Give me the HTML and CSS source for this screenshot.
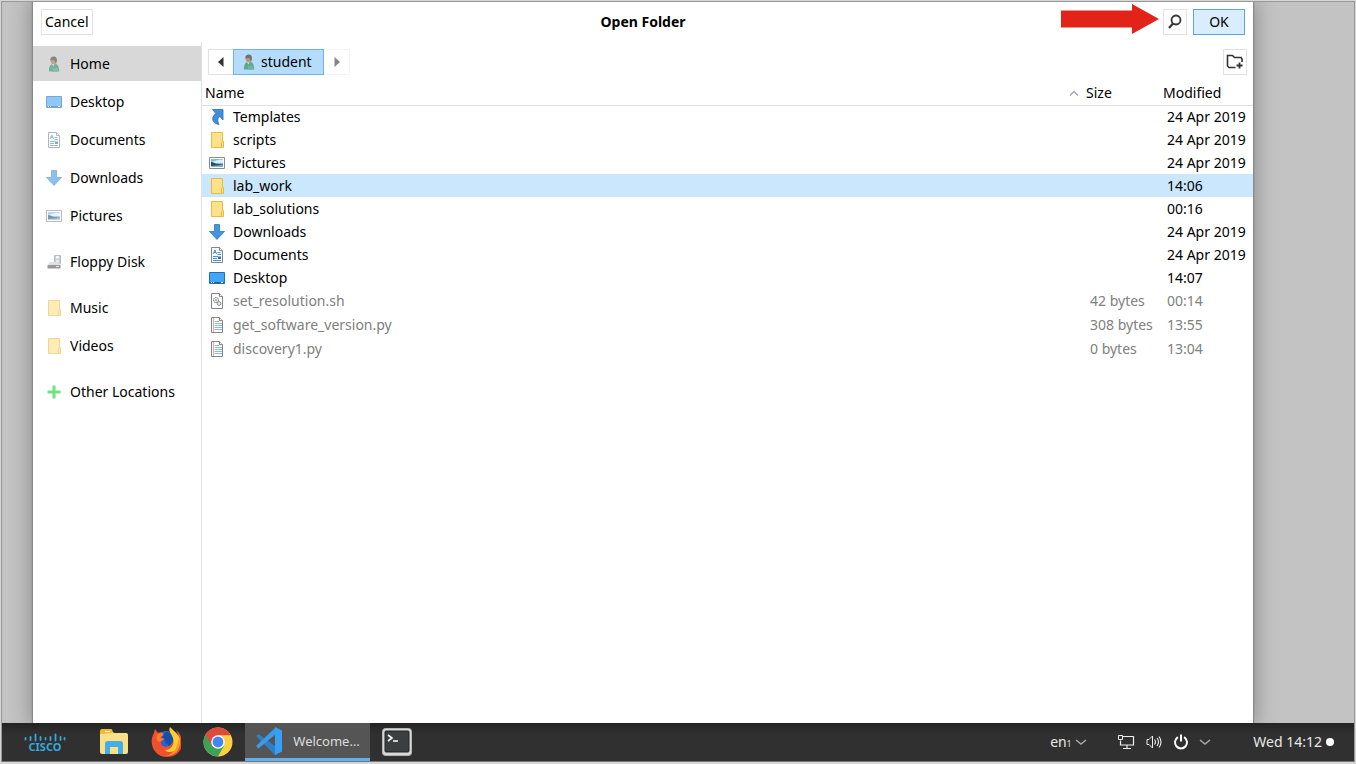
FILE: index.html
```html
<!DOCTYPE html>
<html lang="en">
<head>
<meta charset="utf-8">
<title>Open Folder</title>
<link rel="stylesheet" href="styles.css">
</head>
<body>
<svg class="defs" aria-hidden="true">
  <defs>
    <symbol id="i-user" viewBox="0 0 16 16">
      <path d="M3 15.500c-.3-3 .5-6.300 3-7.500l3-.4c2.500.5 4.200 3.500 4.200 7.900z" fill="#5fa88d"/>
      <path d="M6 8l1.500 2.500 1.300-3z" fill="#d7ebe2"/>
      <ellipse cx="7.500" cy="4.600" rx="2.900" ry="3.800" fill="#b99a7c"/>
      <path d="M4.500 4.500C3.500.5 8-.5 10 1.200c1.500 1.500 1 5-.2 6.500L8.300 4z" fill="#75706c"/>
      <path d="M7 12h5v3.500H7z" fill="#71b79b"/>
    </symbol>
    <symbol id="i-desktop" viewBox="0 0 16 16">
      <path d="M.5 2.500h15v11H.5z" fill="#42a5f5" stroke="#1d6fb8"/>
      <path d="M1 12h14v1H1z" fill="#1c5f9e"/>
      <path d="M2 12.500h1m1 0h1m7 0h2" stroke="#fff"/>
    </symbol>
    <symbol id="i-doc" viewBox="0 0 16 16">
      <path d="M2.500.5h8l3 3v12h-11z" fill="#fff" stroke="#858585"/>
      <path d="M10.500.5v3h3" fill="#eee" stroke="#858585"/>
      <path d="M4 7l2-4 1.500 4M5 5.500h2M8.500 5.500h3M8.500 7.500H12M4 9.500h5M4 11.500h4M4 13.500h8" fill="none" stroke="#3c94dc"/>
      <path d="M9 9.500h3v2.500H9z" fill="#3c6c94"/>
    </symbol>
    <symbol id="i-down" viewBox="0 0 16 16">
      <path d="M5.500.5h5v7h5L8 15.500.5 7.500h5z" fill="#3f96e4" stroke="#2f78bf" stroke-width=".8"/>
    </symbol>
    <symbol id="i-pic" viewBox="0 0 16 16">
      <path d="M.5 2.500h15v11H.5z" fill="#fff" stroke="#8c8c8c"/>
      <path d="M2 4h12v8H2z" fill="#7db8ea"/>
      <path d="M6 6c3-2 5-1 8-1.500V8H2V7z" fill="#dceefa"/>
      <path d="M2 7c3 0 4 2 7 2l5 .5V11H2z" fill="#23506b"/>
      <path d="M2 11l12-1v2H2z" fill="#88b4c9"/>
    </symbol>
    <symbol id="i-floppy" viewBox="0 0 16 16">
      <path d="M8.500 1.500h6v8h-6z" fill="#a8adb3" stroke="#8b8f94"/>
      <path d="M10 2h3v2.500h-3z" fill="#f1f1f1"/><path d="M10 6h3v3h-3z" fill="#d6dbe2"/>
      <path d="M4 8h8l3 3H2z" fill="#ccc"/><path d="M1.500 11h13v3.500h-13z" fill="#555"/>
      <path d="M10 12.500h3" stroke="#ddd"/>
    </symbol>
    <symbol id="i-folder" viewBox="0 0 16 16">
      <path d="M2.500.5h11v9h1v6h-12z" fill="#fde189" stroke="#e3bd48"/>
      <path d="M12.500 15V10.500l1-1" fill="none" stroke="#e3bd48"/>
    </symbol>
    <symbol id="i-plus" viewBox="0 0 16 16">
      <path d="M8 1.500v13M1.500 8h13" stroke="#12cf30" stroke-width="3"/>
    </symbol>
    <symbol id="i-link" viewBox="0 0 16 16">
      <path d="M3.500.5h10.500v10.500l-3.200-3.500c-2.500 1.500-2.500 4.500-.8 8C5 15 .5 9.500 6.800 4.500z" fill="#3f8fdc" stroke="#2b70b3" stroke-width=".8"/>
    </symbol>
    <symbol id="i-script" viewBox="0 0 16 16">
      <path d="M2.500.5h8l3 3v12h-11z" fill="#fff" stroke="#858585"/>
      <path d="M10.500.5v3h3" fill="#eee" stroke="#858585"/>
      <circle cx="7" cy="7" r="2.500" fill="#eee" stroke="#777" stroke-dasharray="1.500 .6"/><circle cx="7" cy="7" r=".8" fill="#777"/>
      <circle cx="10" cy="10.500" r="1.900" fill="#dfe9f2" stroke="#85929e"/>
    </symbol>
    <symbol id="i-text" viewBox="0 0 16 16">
      <path d="M2.500.5h8l3 3v12h-11z" fill="#fff" stroke="#858585"/>
      <path d="M10.500.5v3h3" fill="#eee" stroke="#858585"/>
      <path d="M5.500 4.500H10M5.500 6.500H13M5.500 8.500H13M5.500 10.500H13M5.500 12.500H13" stroke="#8dbbe8"/>
      <path d="M4.500 1v14" stroke="#efa79b"/>
    </symbol>
  </defs>
</svg>
<div class="frame">
  <div class="desktop">
    <main class="dialog">
      <header class="titlebar">
        <button class="btn">Cancel</button>
        <h1 class="title">Open Folder</h1>
        <div class="title-actions">
          <svg class="arrow" viewBox="0 0 98 30" aria-hidden="true"><path d="M0 6.500h71V0l27 15-27 15v-6.500H0z" fill="#e2231a"/></svg>
          <button class="btn icon-btn" aria-label="Search"><svg width="16" height="16" viewBox="0 0 16 16"><circle cx="9" cy="6" r="4.500" fill="none" stroke="#333" stroke-width="1.800"/><path d="M6 9.500L2 14" stroke="#333" stroke-width="2.200"/></svg></button>
          <button class="btn ok">OK</button>
        </div>
      </header>
      <div class="body">
        <nav class="sidebar">
          <ul class="group">
            <li><a class="place current" href="#"><svg class="ico"><use href="#i-user"/></svg>Home</a></li>
            <li><a class="place" href="#"><svg class="ico"><use href="#i-desktop"/></svg>Desktop</a></li>
            <li><a class="place" href="#"><svg class="ico"><use href="#i-doc"/></svg>Documents</a></li>
            <li><a class="place" href="#"><svg class="ico"><use href="#i-down"/></svg>Downloads</a></li>
            <li><a class="place" href="#"><svg class="ico"><use href="#i-pic"/></svg>Pictures</a></li>
          </ul>
          <ul class="group">
            <li><a class="place" href="#"><svg class="ico"><use href="#i-floppy"/></svg>Floppy Disk</a></li>
          </ul>
          <ul class="group">
            <li><a class="place" href="#"><svg class="ico"><use href="#i-folder"/></svg>Music</a></li>
            <li><a class="place" href="#"><svg class="ico"><use href="#i-folder"/></svg>Videos</a></li>
          </ul>
          <ul class="group">
            <li><a class="place" href="#"><svg class="ico"><use href="#i-plus"/></svg>Other Locations</a></li>
          </ul>
        </nav>
        <section class="content">
          <div class="pathbar">
            <div class="crumbs">
              <button class="crumb step" aria-label="Back"><svg width="6" height="10" viewBox="0 0 6 10"><path d="M5.500 0v10L0 5z" fill="#333"/></svg></button>
              <button class="crumb active"><svg class="ico"><use href="#i-user"/></svg>student</button>
              <button class="crumb step next" aria-label="Forward"><svg width="6" height="10" viewBox="0 0 6 10"><path d="M.5 0v10L6 5z" fill="#858585"/></svg></button>
            </div>
            <button class="btn icon-btn" aria-label="New folder"><svg width="18" height="16" viewBox="0 0 18 16"><path d="M9.500 13.500H3L1.500 12V1.500h5l2 2H15l1 1.500v3" fill="none" stroke="#333" stroke-width="1.600"/><path d="M13.500 8.500v6M10.500 11.500h6" stroke="#333" stroke-width="1.800"/></svg></button>
          </div>
          <table class="files">
            <thead>
              <tr><th class="c-name"><span class="head">Name<svg width="10" height="6" viewBox="0 0 10 6"><path d="M1 5.500L5 1.500l4 4" fill="none" stroke="#a0a0a0" stroke-width="1.200"/></svg></span></th><th class="c-size">Size</th><th class="c-mod">Modified</th></tr>
            </thead>
            <tbody>
              <tr><td><span class="file"><svg class="ico"><use href="#i-link"/></svg>Templates</span></td><td></td><td>24 Apr 2019</td></tr>
              <tr><td><span class="file"><svg class="ico"><use href="#i-folder"/></svg>scripts</span></td><td></td><td>24 Apr 2019</td></tr>
              <tr><td><span class="file"><svg class="ico"><use href="#i-pic"/></svg>Pictures</span></td><td></td><td>24 Apr 2019</td></tr>
              <tr class="selected"><td><span class="file"><svg class="ico"><use href="#i-folder"/></svg>lab_work</span></td><td></td><td>14:06</td></tr>
              <tr><td><span class="file"><svg class="ico"><use href="#i-folder"/></svg>lab_solutions</span></td><td></td><td>00:16</td></tr>
              <tr><td><span class="file"><svg class="ico"><use href="#i-down"/></svg>Downloads</span></td><td></td><td>24 Apr 2019</td></tr>
              <tr><td><span class="file"><svg class="ico"><use href="#i-doc"/></svg>Documents</span></td><td></td><td>24 Apr 2019</td></tr>
              <tr><td><span class="file"><svg class="ico"><use href="#i-desktop"/></svg>Desktop</span></td><td></td><td>14:07</td></tr>
            </tbody>
            <tbody class="disabled">
              <tr><td><span class="file"><svg class="ico"><use href="#i-script"/></svg>set_resolution.sh</span></td><td>42 bytes</td><td>00:14</td></tr>
              <tr><td><span class="file"><svg class="ico"><use href="#i-text"/></svg>get_software_version.py</span></td><td>308 bytes</td><td>13:55</td></tr>
              <tr><td><span class="file"><svg class="ico"><use href="#i-text"/></svg>discovery1.py</span></td><td>0 bytes</td><td>13:04</td></tr>
            </tbody>
          </table>
        </section>
      </div>
    </main>
  </div>
  <footer class="taskbar">
    <button class="task cisco" aria-label="Menu">
      <svg width="42" height="9" viewBox="0 0 42 9"><path d="M1.500 5v1.500M6.500 4v3M11.500 1.500v6M16.500 4v3M21.500 5v1.500M26.500 4v3M31.500 1.500v6M36.500 4v3M40.500 5v1.500" stroke="#35a8dc" stroke-width="1.800" stroke-linecap="round"/></svg>
      <span>CISCO</span>
    </button>
    <button class="task" aria-label="Files"><svg width="30" height="28" viewBox="0 0 30 28"><path d="M1 4q0-2 2-2h9l3 3h12q2 0 2 2v17q0 2-2 2H3q-2 0-2-2z" fill="#fbe08a"/><path d="M1 6V3q0-2 2-2h9q1.500 0 1.500 2v2z" fill="#f4b92e"/><path d="M6 3.500h5" stroke="#fff"/><path d="M6 26V15.500q0-2.500 2.500-2.500h13q2.500 0 2.500 2.500V26h-5v-7h-8v7z" fill="#42b0e6"/></svg></button>
    <button class="task" aria-label="Firefox"><svg width="30" height="32" viewBox="0 0 30 32"><circle cx="15" cy="17" r="12" fill="#2066d0"/><path d="M15 6c6 0 9 5 8 11l-5 3-7-8z" fill="#164da8"/><path d="M3 7l1-4 3 4c2-1 4-1 5 0l-3 4 5 2-4 3c-1 4 4 6 8 4 3-1 5-5 4-9l3 2c4-2 2-5 0-9l3 3c8 12 0 24-12 24C3 31-3 17 3 7z" fill="#f1502c"/><path d="M19 1c-2 4 1 6 2 9 4 6 0 14-7 14 2 3 9 3 13-2 4-6 2-13-4-17z" fill="#ffcf32"/><path d="M28 12c3 10-3 18-13 18 6-2 10-6 11-11z" fill="#ff9a27"/><path d="M7 8c3-2 6-1 5 1l-3 3 4 1-5 3c-3-2-3-5-1-8z" fill="#fb7b35"/></svg></button>
    <button class="task" aria-label="Chrome"><svg width="30" height="30" viewBox="0 0 30 30"><circle cx="15" cy="15" r="14.500" fill="#fbd043"/><path d="M15 15L2.400 7.800A14.500 14.500 0 0 0 15 29.500l6.200-11z" fill="#3da157"/><path d="M2.400 7.800A14.500 14.500 0 0 1 27.700 8.200H15L9 18.500z" fill="#dd4b3e"/><circle cx="15" cy="15" r="6.800" fill="#fff"/><circle cx="15" cy="15" r="5.400" fill="#4285f4"/></svg></button>
    <button class="task running"><svg width="28" height="28" viewBox="0 0 28 28"><path d="M1 9l2.500-2L27 24l-7 4z" fill="#2d7fc7"/><path d="M1 19l2.500 2.500L21 7V0z" fill="#3b9be8"/><path d="M20 0l7 3.500v21L20 28z" fill="#37a0f4"/></svg>Welcome…</button>
    <button class="task" aria-label="Terminal"><svg width="30" height="28" viewBox="0 0 30 28"><rect x=".5" y=".5" width="29" height="27" rx="3" fill="#d8d8d8" stroke="#b5b5b5"/><rect x="3" y="3" width="24" height="21" rx="1" fill="#3b3f3f" stroke="#222"/><path d="M6 7l4 3-4 3M11 13h5" fill="none" stroke="#fff" stroke-width="1.600"/></svg></button>
    <div class="tray">
      <button class="tray-item lang">en<small>1</small><svg width="12" height="7" viewBox="0 0 12 7"><path d="M1 1l5 4 5-4" fill="none" stroke="#aaa" stroke-width="1.500"/></svg></button>
      <button class="tray-item status" aria-label="System">
        <svg width="18" height="16" viewBox="0 0 18 16"><path d="M5 2.500h11.500v8.500h-13V6.500M10 11v3.500M6 14.500h8" fill="none" stroke="#eee" stroke-width="1.200"/><path d="M1.500 1.500h4v4h-4z" fill="#333" stroke="#eee"/></svg>
        <svg width="18" height="16" viewBox="0 0 18 16"><path d="M2 5.500h2l3.500-3.500v12L4 10.500H2z" fill="none" stroke="#eee"/><path d="M9.500 5.500q2 2.500 0 5M12 4q3 4 0 8M14 2.500q4 5.500 0 11" fill="none" stroke="#eee" stroke-width="1.100"/></svg>
        <svg width="16" height="16" viewBox="0 0 16 16"><path d="M5 3.200a6 6 0 1 0 6 0M8 .5v7" fill="none" stroke="#fff" stroke-width="2"/></svg>
        <svg width="12" height="7" viewBox="0 0 12 7"><path d="M1 1l5 4 5-4" fill="none" stroke="#aaa" stroke-width="1.500"/></svg>
      </button>
      <button class="tray-item clock">Wed 14:12<i class="dot"></i></button>
    </div>
  </footer>
</div>
</body>
</html>
```
FILE: styles.css
```css
* { box-sizing: border-box; }
body {
  margin: 0;
  padding: 1px 1px 2px;
  height: 100vh;
  background: #d6d6d6;
  color: #000;
  font: 14px/20px "Noto Sans", sans-serif;
}
button { font: inherit; color: inherit; cursor: pointer; }
.defs { position: absolute; width: 0; height: 0; }
.ico { width: 16px; height: 16px; flex: none; }
.frame {
  display: flex;
  flex-direction: column;
  height: 100%;
  border: 1px solid #999;
  border-bottom: 0;
  background: #c3c3c3;
}
.desktop {
  flex: 1;
  display: flex;
  padding: 0 101px 0 31px;
  overflow: hidden;
}
.dialog {
  flex: 1;
  display: flex;
  flex-direction: column;
  background: #fff;
  box-shadow: 0 0 1px 1px #888, 0 0 20px 2px rgba(0, 0, 0, .3);
}
.titlebar {
  display: grid;
  grid-template-columns: 1fr auto 1fr;
  align-items: center;
  height: 40px;
  padding: 0 8px;
}
.title { margin: 0; font-size: 14px; font-weight: 700; }
.btn {
  height: 26px;
  padding: 0 3px;
  border: 1px solid #e2e2e2;
  background: #fff;
  justify-self: start;
  line-height: 20px;
}
.title-actions { display: flex; justify-content: flex-end; align-items: center; gap: 6px; }
.arrow { width: 98px; height: 30px; margin: 0 -2px 6px 0; }
.icon-btn { display: flex; align-items: center; justify-content: center; width: 24px; padding: 0; }
.ok { width: 52px; background: #d9edfd; border-color: #5ca3e3; }
.body { flex: 1; display: flex; }
.sidebar { width: 169px; padding-top: 4px; border-right: 1px solid #e0e0e0; }
.group { margin: 0 0 11px; padding: 0; list-style: none; display: grid; gap: 3px; }
.place {
  display: flex;
  align-items: center;
  gap: 8px;
  height: 35px;
  padding-left: 13px;
  color: inherit;
  text-decoration: none;
}
.place .ico { opacity: .6; }
.current { background: #d8d8d8; }
.current .ico { opacity: .8; }
.content { flex: 1; }
.pathbar { display: flex; justify-content: space-between; align-items: center; padding: 7px 6px 6px; }
.crumbs { display: flex; }
.crumb {
  display: flex;
  align-items: center;
  justify-content: center;
  gap: 4px;
  height: 26px;
  padding: 0;
  border: 1px solid #e2e2e2;
  background: #fff;
}
.step { width: 25px; border-right: 0; }
.next { width: 26px; border: 1px solid #f3f3f3; border-left: 0; }
.active { width: 91px; padding-left: 7px; justify-content: flex-start; background: #b5dcfb; border-color: #6fb3ee; }
.files { width: 100%; border-collapse: collapse; table-layout: fixed; }
.files th { height: 24px; padding: 0 0 0 3px; border-bottom: 1px solid #e0e0e0; font-weight: 400; text-align: left; }
.files td { height: 23px; padding: 0 0 0 7px; line-height: 20px; }
.files .disabled td { height: 24px; color: #808080; }
.c-size { width: 77px; }
.c-mod { width: 93px; }
.head { display: flex; align-items: center; justify-content: space-between; padding-right: 4px; }
.file { display: flex; align-items: center; gap: 8px; }
.selected { background: #cbe7fd; }
.taskbar {
  display: flex;
  align-items: stretch;
  height: 39px;
  background: linear-gradient(#242424, #303030 30%);
  border-bottom: 1px solid #777;
  color: #e8e8e8;
}
.task {
  display: flex;
  align-items: center;
  justify-content: center;
  width: 52px;
  padding: 0;
  border: 0;
  background: none;
}
.cisco { flex-direction: column; width: 86px; color: #35a8dc; font-weight: 700; font-size: 11px; line-height: 10px; }
.running { width: 125px; margin: 0 1px; gap: 10px; background: #555; border-bottom: 3px solid #62b0f0; color: #ddd; font-size: 13px; }
.tray { display: flex; align-items: center; margin-left: auto; padding-right: 20px; }
.tray-item { display: flex; align-items: center; padding: 0; border: 0; background: none; }
.lang small { font-size: 8px; margin: 4px 4px 0 0; }
.status { gap: 10px; margin: 0 42px 0 30px; }
.dot { width: 8px; height: 8px; margin-left: 4px; border-radius: 50%; background: #fff; }
```
